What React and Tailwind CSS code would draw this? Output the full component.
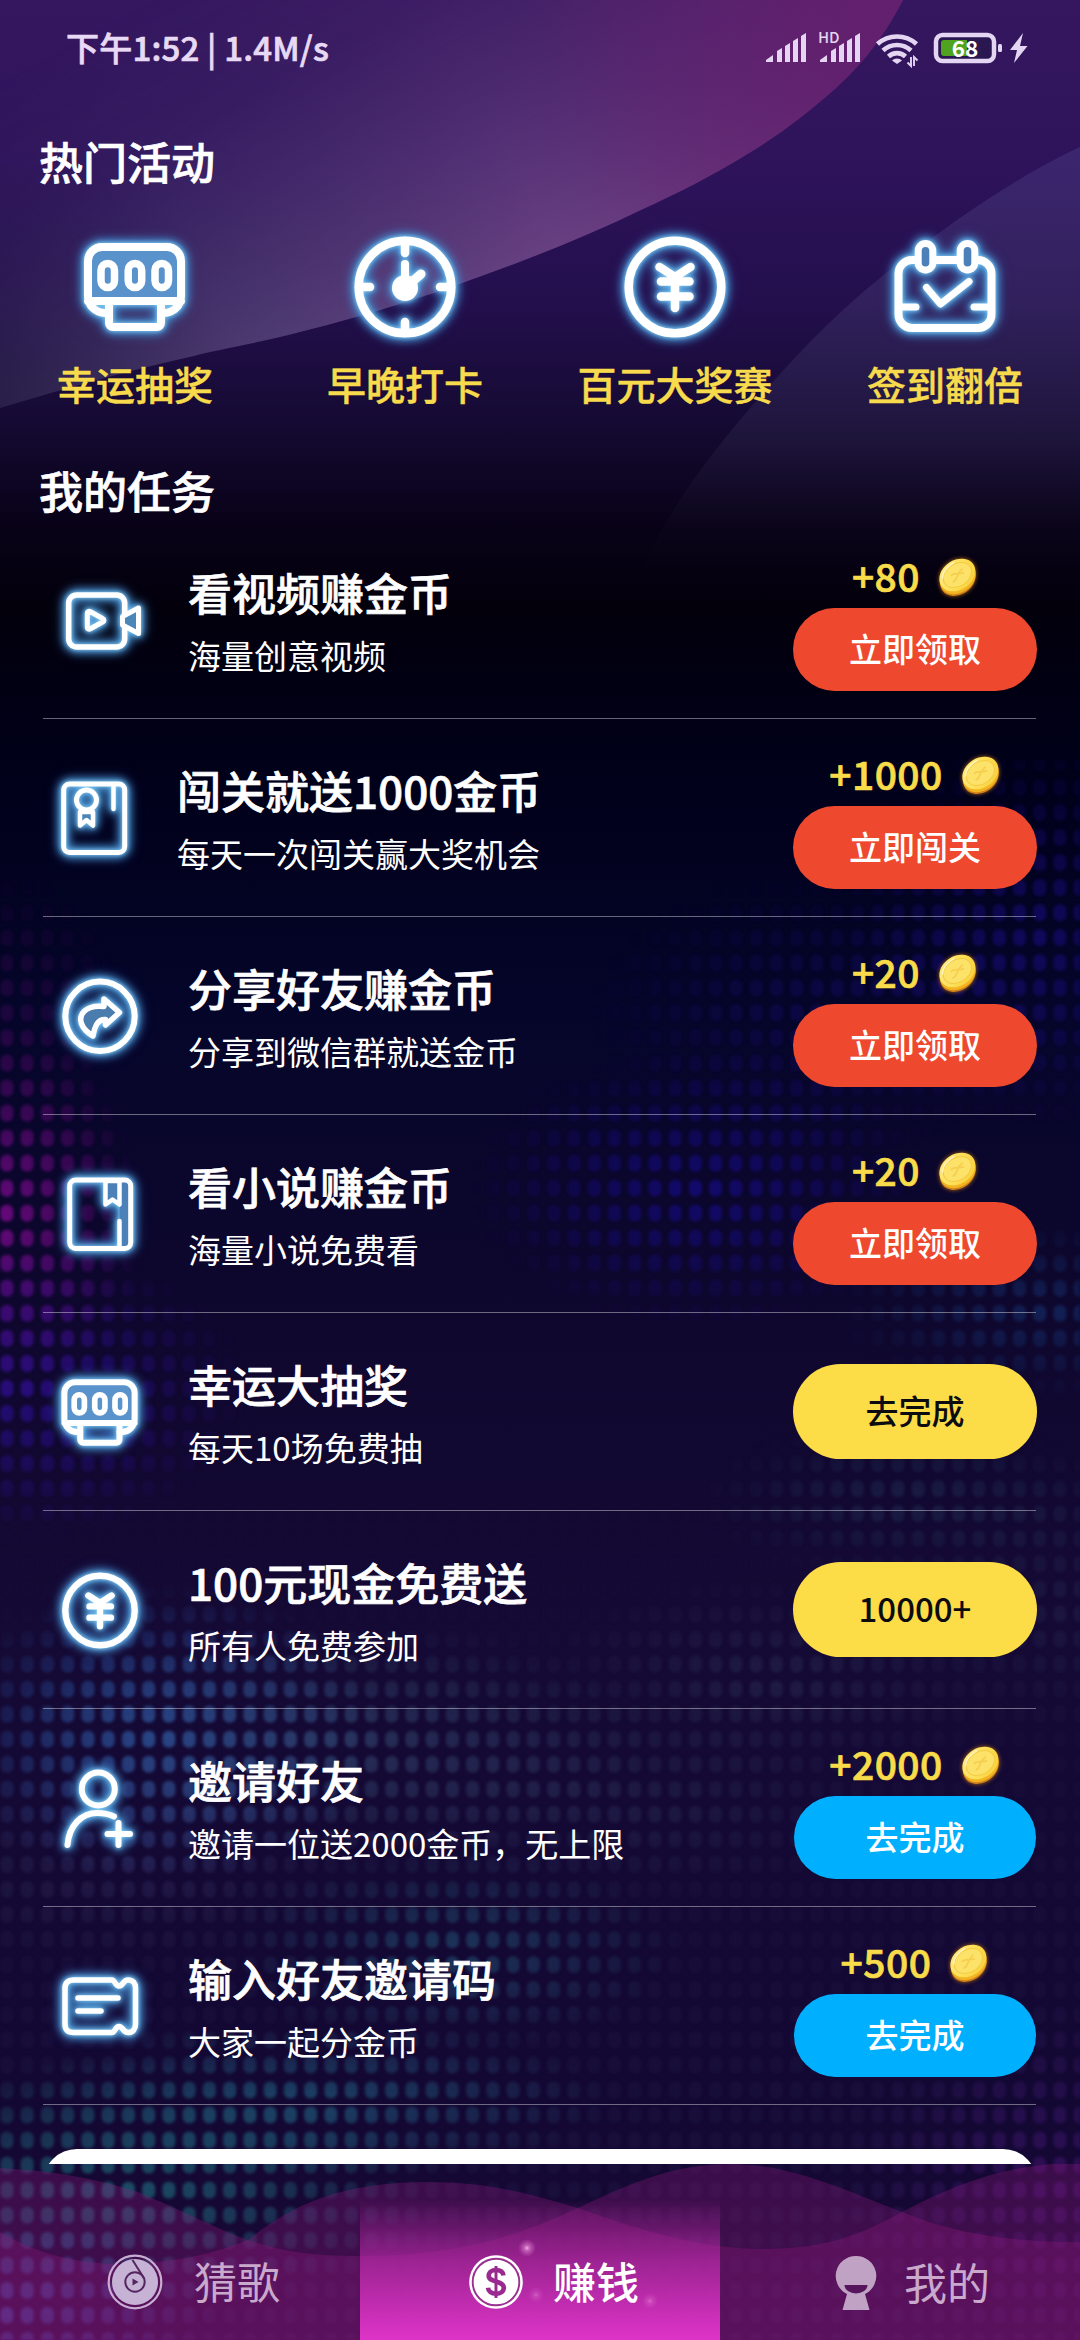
import React from "react";

const FONT = "font-['Noto_Sans_CJK_SC','Noto_Sans',sans-serif]";
const GLOW =
  "[filter:drop-shadow(0_0_2px_#8fd2f8)_drop-shadow(0_0_4px_#4f9bd6)_drop-shadow(0_0_5px_#3b7fc4)]";
const HEAVY = "[-webkit-text-stroke:0.7px_currentColor]";

const RIBBON =
  "M0 0H903C882 40 862 64 836 88C808 113 778 136 746 155C710 177 678 193 641 210C604 228 564 245 522 261C452 288 378 313 300 332C250 345 215 350 194 356C130 370 60 390 0 408Z";

const BLOBS = [
  { x: 0, y: 1215, rx: 140, ry: 200, c: "#8a0a9a", o: 0.85 },
  { x: 20, y: 1390, rx: 230, ry: 150, c: "#3010a8", o: 0.7 },
  { x: 0, y: 1010, rx: 120, ry: 140, c: "#5a0a70", o: 0.35 },
  { x: 160, y: 1735, rx: 220, ry: 150, c: "#2c60bc", o: 0.75 },
  { x: 330, y: 1740, rx: 330, ry: 120, c: "#354f76", o: 0.65 },
  { x: 130, y: 1860, rx: 260, ry: 110, c: "#4a4a80", o: 0.25 },
  { x: 450, y: 1950, rx: 230, ry: 100, c: "#205575", o: 0.65 },
  { x: 310, y: 2100, rx: 300, ry: 80, c: "#1f6080", o: 0.7 },
  { x: 120, y: 2190, rx: 320, ry: 130, c: "#1c7884", o: 0.7 },
  { x: 0, y: 2310, rx: 220, ry: 100, c: "#3060c0", o: 0.7 },
  { x: 700, y: 1190, rx: 230, ry: 140, c: "#1a0da8", o: 0.62 },
  { x: 1040, y: 930, rx: 200, ry: 200, c: "#200f9c", o: 0.55 },
  { x: 830, y: 1010, rx: 240, ry: 140, c: "#200f90", o: 0.35 },
  { x: 1050, y: 1310, rx: 220, ry: 90, c: "#17428a", o: 0.5 },
  { x: 910, y: 1500, rx: 220, ry: 80, c: "#24385f", o: 0.5 },
  { x: 1080, y: 1600, rx: 170, ry: 140, c: "#2c3460", o: 0.35 },
  { x: 770, y: 1680, rx: 230, ry: 100, c: "#323a60", o: 0.4 },
  { x: 600, y: 1800, rx: 280, ry: 100, c: "#2f3862", o: 0.4 },
  { x: 1080, y: 2180, rx: 240, ry: 180, c: "#5a1090", o: 0.4 },
];

function Backdrop() {
  return (
    <svg className="absolute inset-0 h-[2340px] w-[1080px]" viewBox="0 0 1080 2340">
      <defs>
        <linearGradient id="night" x1="0" y1="0" x2="0" y2="1">
          <stop offset="0" stopColor="#35175f" />
          <stop offset="0.07" stopColor="#2e135b" />
          <stop offset="0.13" stopColor="#230f4c" />
          <stop offset="0.18" stopColor="#150a33" />
          <stop offset="0.225" stopColor="#080217" />
          <stop offset="0.26" stopColor="#03000c" />
          <stop offset="0.32" stopColor="#000018" />
          <stop offset="0.43" stopColor="#05052a" />
          <stop offset="0.55" stopColor="#0e072d" />
          <stop offset="0.7" stopColor="#150a35" />
          <stop offset="0.9" stopColor="#130833" />
          <stop offset="1" stopColor="#1a0836" />
        </linearGradient>
        <linearGradient id="ribbonTone" gradientUnits="userSpaceOnUse" x1="860" y1="0" x2="0" y2="400">
          <stop offset="0" stopColor="#64226f" />
          <stop offset="0.4" stopColor="#704688" />
          <stop offset="0.75" stopColor="#5c4a80" />
          <stop offset="1" stopColor="#383058" />
        </linearGradient>
        <linearGradient id="ribbonFade" gradientUnits="userSpaceOnUse" x1="600" y1="250" x2="400" y2="-130">
          <stop offset="0" stopColor="#fff" stopOpacity="0.95" />
          <stop offset="0.35" stopColor="#fff" stopOpacity="0.55" />
          <stop offset="0.7" stopColor="#fff" stopOpacity="0.15" />
          <stop offset="1" stopColor="#fff" stopOpacity="0" />
        </linearGradient>
        <radialGradient id="ribbonTop" gradientUnits="userSpaceOnUse" cx="880" cy="10" r="340">
          <stop offset="0" stopColor="#64206e" stopOpacity="0.9" />
          <stop offset="1" stopColor="#64206e" stopOpacity="0" />
        </radialGradient>
        <mask id="ribbonMask">
          <rect width="1080" height="500" fill="url(#ribbonFade)" />
        </mask>
        <linearGradient id="hill" x1="0" y1="0" x2="0" y2="1">
          <stop offset="0" stopColor="#3c266f" />
          <stop offset="0.35" stopColor="#33235e" stopOpacity="0.85" />
          <stop offset="0.65" stopColor="#241c42" stopOpacity="0.6" />
          <stop offset="0.95" stopColor="#0a0614" stopOpacity="0" />
        </linearGradient>
        <pattern id="dot" patternUnits="userSpaceOnUse" x="-3.2" y="1125.5" width="20.25" height="25.05">
          <rect x="3.6" y="4" width="13" height="17" rx="6" fill="#fff" />
        </pattern>
        <filter id="soften">
          <feGaussianBlur stdDeviation="1.6" />
        </filter>
        <mask id="dots">
          <rect y="760" width="1080" height="1580" fill="url(#dot)" filter="url(#soften)" />
        </mask>
        {BLOBS.map((b, i) => (
          <radialGradient id={"blob" + i} key={i}>
            <stop offset="0" stopColor={b.c} stopOpacity={b.o * 0.85} />
            <stop offset="0.5" stopColor={b.c} stopOpacity={b.o * 0.45} />
            <stop offset="1" stopColor={b.c} stopOpacity="0" />
          </radialGradient>
        ))}
        <linearGradient id="haze" x1="0" y1="0" x2="0" y2="1">
          <stop offset="0" stopColor="#2d2a5c" stopOpacity="0" />
          <stop offset="1" stopColor="#2d2a5c" stopOpacity="0.25" />
        </linearGradient>
      </defs>
      <rect width="1080" height="2340" fill="url(#night)" />
      <g mask="url(#ribbonMask)">
        <path d={RIBBON} fill="url(#ribbonTone)" />
      </g>
      <path d={RIBBON} fill="url(#ribbonTop)" />
      <path d="M1080 147C1010 180 950 224 900 262C840 308 790 360 740 420C690 480 655 530 630 600H1080Z" fill="url(#hill)" />
      <g mask="url(#dots)">
        <rect y="1500" width="1080" height="840" fill="url(#haze)" />
        {BLOBS.map((b, i) => (
          <ellipse key={i} cx={b.x} cy={b.y} rx={b.rx} ry={b.ry} fill={"url(#blob" + i + ")"} />
        ))}
      </g>
    </svg>
  );
}

function StatusIcons() {
  const bars = [
    [11, 17],
    [19, 12],
    [27, 7],
    [35, 2],
  ];
  const Signal = ({ x }) => (
    <g transform={"translate(" + x + " 30)"}>
      <path d="M0 31V29L7 24V31Z" />
      {bars.map(([bx, by]) => (
        <path key={bx} d={"M" + bx + " 31V" + (by + 3) + "L" + (bx + 5) + " " + by + "V31Z"} />
      ))}
    </g>
  );
  return (
    <svg className="h-[60px] w-[280px]" viewBox="760 16 280 60" fill="#e4d6f2">
      <Signal x={766} />
      <Signal x={820} />
      <text x="818" y="42" fontSize="15" fontWeight="500" fontFamily="Noto Sans CJK SC, sans-serif">HD</text>
      <g fill="none" stroke="#e4d6f2" strokeWidth="4.6">
        <path d="M877.5 43a29 29 0 0 1 39 0" />
        <path d="M883 49.5a20.5 20.5 0 0 1 28 0" />
        <path d="M888.500 55.500a12.500 12.500 0 0 1 17 0" />
      </g>
      <path d="M892 59.500a7 7 0 0 1 10 0L897 63Z" />
      <path d="M911 56V65L907.500 61.500M914 65V56L917.500 59.500" fill="none" stroke="#e4d6f2" strokeWidth="1.9" />
      <rect x="936" y="34" width="58" height="26" rx="6.500" fill="#2a1650" stroke="#e4d6f2" strokeWidth="4.500" />
      <path d="M944 39H967V55H944a3 3 0 0 1-3-3V42a3 3 0 0 1 3-3Z" fill="#4fa31e" />
      <text x="965" y="55.500" fill="#fff" fontSize="22.500" fontWeight="600" textAnchor="middle" fontFamily="Noto Sans CJK SC, sans-serif">68</text>
      <rect x="998" y="43" width="4" height="8" rx="1.500" />
      <path d="M1023 32L1010 49H1017L1014 62L1027.500 45H1020Z" />
    </svg>
  );
}

function SlotShapes() {
  return (
    <>
      <path d="M14 74V34a14 14 0 0 1 14-14H92a14 14 0 0 1 14 14V74Z" fill="#5a92cc" stroke="none" />
      <path
        d="M34 86H30a17 17 0 0 1-17-17V34a14 14 0 0 1 14-14H92a14 14 0 0 1 14 14V69a17 17 0 0 1-17 17h-3M13 74H106"
        strokeWidth="8"
      />
      <path d="M34 76V96a4 4 0 0 0 4 4H82a4 4 0 0 0 4-4V76" strokeWidth="8" />
      <g strokeWidth="7.5">
        <rect x="26" y="36.500" width="13.500" height="24" rx="6.700" />
        <rect x="53.200" y="36.500" width="13.500" height="24" rx="6.700" />
        <rect x="80" y="36.500" width="13.500" height="24" rx="6.700" />
      </g>
    </>
  );
}

function YenShapes() {
  return (
    <>
      <circle cx="60" cy="60" r="46.300" strokeWidth="8.500" />
      <path d="M44.500 40L60 50L75.500 40M60 50V81M46 54.500H74.500M46 69.500H74.500" strokeWidth="8.500" />
    </>
  );
}

const SHAPES = {
  slot: <SlotShapes />,
  yen: <YenShapes />,
  clock: (
    <>
      <circle cx="60" cy="60" r="46.300" strokeWidth="8.500" />
      <path d="M60 14V26M60 106V95M14 60H25M106 60H95" strokeWidth="8.500" />
      <path d="M60 37V60" strokeWidth="8" />
      <path d="M60 61L76 47" strokeWidth="9" />
      <circle cx="60" cy="61" r="13" fill="#fff" stroke="none" />
    </>
  ),
  calendar: (
    <>
      <path d="M31 33H27a13.500 13.500 0 0 0-13.500 13.500V87A13.500 13.500 0 0 0 27 101H93a13.500 13.500 0 0 0 13.500-14V46.500A13.500 13.500 0 0 0 93 33H91M50 33H73" strokeWidth="8" />
      <rect x="33.200" y="16.500" width="14.600" height="26.500" rx="7.300" strokeWidth="7" fill="#4b80b8" />
      <rect x="75.200" y="16.500" width="14.600" height="26.500" rx="7.300" strokeWidth="7" fill="#4b80b8" />
      <path d="M41.500 60.500L55.500 77L84 54.500" strokeWidth="7" />
      <path d="M14 80H31M106 80H89" strokeWidth="7" />
    </>
  ),
  smallSlot: (
    <g transform="translate(59.500 60.500) scale(.755) translate(-59.500 -60)">
      <SlotShapes />
    </g>
  ),
  smallYen: (
    <g transform="translate(60 60.500) scale(.75) translate(-60 -60)">
      <YenShapes />
    </g>
  ),
  video: (
    <g strokeWidth="5.500">
      <rect x="28.700" y="35" width="56" height="52" rx="8" />
      <path d="M47.300 53V67.500C47.300 69 49 69.500 50 69L62.500 62C64.500 61 64.500 59.500 62.500 58.500L50 51.500C49 51 47.300 51.500 47.300 53Z" strokeWidth="5" />
      <path d="M82.500 56.500L98.500 48V73.500L82.500 65Z" fill="#4b86b8" strokeWidth="5" />
    </g>
  ),
  medal: (
    <g strokeWidth="5">
      <rect x="23.700" y="26" width="61" height="68.500" rx="6" />
      <circle cx="46.500" cy="42" r="10" />
      <path d="M40 54V67.500L46.500 62L53 67.500V54Z" fill="#4b86b8" strokeWidth="4.500" />
      <path d="M73.500 27V51" strokeWidth="4.500" />
    </g>
  ),
  share: (
    <>
      <circle cx="60" cy="60.300" r="34.700" strokeWidth="6" />
      <path d="M64 43L79.500 56.500L65.500 69V63.500C58 63 55 69 53 80C41 73 37 62 44.500 55C50 50 56 49.500 64 50.500Z" strokeWidth="5.500" fill="#4a7cae" />
    </>
  ),
  book: (
    <g strokeWidth="5">
      <path d="M79.500 26H90V94H79.500Z" fill="#4b80b8" stroke="none" />
      <rect x="29.700" y="26" width="61" height="68.500" rx="6" />
      <path d="M65.500 27V50.500L72.500 45.500L79.500 50.500V27Z" fill="#4b80b8" strokeWidth="4.500" />
      <path d="M79.500 67V94" strokeWidth="4.500" />
    </g>
  ),
  invite: (
    <g strokeWidth="6">
      <circle cx="58.300" cy="41" r="16.500" />
      <path d="M27.500 97C29 78 41 65 57 65C64 65 69 66 74 68.500" />
      <path d="M78.500 75V97M67.500 86H90" />
    </g>
  ),
  ticket: (
    <g strokeWidth="5.500">
      <path d="M34 34H72C75 34 75 40 79 40C83 40 83 34 88 34C93 34 95.500 37 95.500 42V78C95.500 83 93 86.500 88 86.500C83 86.500 83 80.500 79 80.500C75 80.500 75 86.500 72 86.500H34C28 86.500 25 84 25 78V42C25 37 28 34 34 34Z" />
      <path d="M38 52H78M38 65H61" />
    </g>
  ),
};

function NeonIcon({ name }) {
  return (
    <svg
      className={"h-[120px] w-[120px] shrink-0 overflow-visible " + GLOW}
      viewBox="0 0 120 120"
      fill="none"
      stroke="#fff"
      strokeLinecap="round"
      strokeLinejoin="round"
    >
      {SHAPES[name]}
    </svg>
  );
}

function Coin() {
  return (
    <svg className="-mt-[2px] h-[40px] w-[40px] overflow-visible [filter:drop-shadow(0_0_2px_#b06a10)]" viewBox="0 0 40 40">
      <defs>
        <linearGradient id="coinFace" x1="0" y1="0" x2="1" y2="1">
          <stop offset="0" stopColor="#ffeb8a" />
          <stop offset="0.5" stopColor="#fddf57" />
          <stop offset="1" stopColor="#f7cd34" />
        </linearGradient>
      </defs>
      <g transform="rotate(-34 20 20)">
        <ellipse cx="17.800" cy="23.200" rx="18.800" ry="14.600" fill="#cf7f1c" />
        <ellipse cx="18.800" cy="21.400" rx="19.200" ry="14.900" fill="#f3b422" />
        <ellipse cx="20" cy="18.800" rx="19.300" ry="14.800" fill="url(#coinFace)" />
        <ellipse cx="20" cy="18.800" rx="15.200" ry="11.200" fill="#fde26a" stroke="#f4cb45" strokeWidth="1" />
        <path d="M12 22C17 24 19 17 28 16.500M14 16C18 14 22 20 27 20.500" stroke="#f6cf50" strokeWidth="1.800" fill="none" />
        <path d="M6 13C10 7.500 17 6 24 6.500" stroke="#fff6c4" strokeWidth="1.500" fill="none" strokeLinecap="round" />
      </g>
    </svg>
  );
}

const ACTIVITIES = [
  { icon: "slot", label: "幸运抽奖" },
  { icon: "clock", label: "早晚打卡" },
  { icon: "yen", label: "百元大奖赛" },
  { icon: "calendar", label: "签到翻倍" },
];

const TASKS = [
  { icon: "video", title: "看视频赚金币", sub: "海量创意视频", reward: "+80", action: "立即领取", tone: "red" },
  { icon: "medal", title: "闯关就送1000金币", sub: "每天一次闯关赢大奖机会", reward: "+1000", action: "立即闯关", tone: "red", tight: true },
  { icon: "share", title: "分享好友赚金币", sub: "分享到微信群就送金币", reward: "+20", action: "立即领取", tone: "red" },
  { icon: "book", title: "看小说赚金币", sub: "海量小说免费看", reward: "+20", action: "立即领取", tone: "red" },
  { icon: "smallSlot", title: "幸运大抽奖", sub: "每天10场免费抽", action: "去完成", tone: "yellow" },
  { icon: "smallYen", title: "100元现金免费送", sub: "所有人免费参加", action: "10000+", tone: "yellow" },
  { icon: "invite", title: "邀请好友", sub: "邀请一位送2000金币，无上限", reward: "+2000", action: "去完成", tone: "blue" },
  { icon: "ticket", title: "输入好友邀请码", sub: "大家一起分金币", reward: "+500", action: "去完成", tone: "blue" },
];

const TONES = {
  red: "h-[83px] w-[244px] bg-[#ee482f] text-white",
  yellow: "h-[95px] w-[244px] bg-[#fcdc47] text-[#0c0c10]",
  blue: "h-[83px] w-[242px] bg-[#00b0ff] text-white",
};

function TaskRow({ task }) {
  return (
    <li className="flex h-[198px] flex-col">
      <div className="flex flex-1 items-center pr-[43px] pl-10">
        <NeonIcon name={task.icon} />
        <div className={"mt-[3px] flex-1 whitespace-nowrap text-white " + (task.tight ? "ml-[17px]" : "ml-[28px]")}>
          <h3 className={"text-[44px] leading-[60px] font-medium " + HEAVY}>{task.title}</h3>
          <p className="mt-2 text-[33px] leading-[50px] font-normal">{task.sub}</p>
        </div>
        <div className="flex w-[244px] flex-col items-center">
          {task.reward && (
            <div className="mt-1 mb-1.5 flex h-[50px] items-center gap-[18px] text-[39px] font-medium text-[#f9dc4a]">
              <span className={"-mt-[5px] leading-[50px] tracking-[0.5px] " + HEAVY}>{task.reward}</span>
              <Coin />
            </div>
          )}
          <button className={"flex items-center justify-center rounded-full pb-[2px] text-[33px] leading-none font-medium " + TONES[task.tone]}>
            {task.action}
          </button>
        </div>
      </div>
      <div className="mr-[44px] ml-[43px] h-px bg-white/40" />
    </li>
  );
}

function RecordIcon() {
  return (
    <svg className="h-[56px] w-[56px]" viewBox="0 0 56 56">
      <circle cx="28" cy="28" r="26.300" fill="none" stroke="#c9aed2" strokeWidth="2.200" />
      <circle cx="28" cy="28" r="23" fill="#c5b2d4" />
      <g fill="none" stroke="#54265f" strokeWidth="2">
        <circle cx="28" cy="28" r="9.700" />
        <path d="M25.500 6L37.500 25" />
      </g>
      <path d="M25.500 24.500V31.500L31.500 28Z" fill="#54265f" />
    </svg>
  );
}

function DollarIcon() {
  return (
    <svg className="h-[56px] w-[56px]" viewBox="0 0 56 56">
      <circle cx="28" cy="28" r="26.800" fill="#fff" />
      <circle cx="28" cy="28" r="23.300" fill="none" stroke="#9a3091" strokeWidth="1.900" />
      <path
        d="M35.500 21.500C35 17.800 32 16 28 16C24 16 20.700 18.200 20.700 21.700C20.700 29 35.800 26 35.800 33.800C35.800 37.500 32.500 39.700 28 39.700C23.500 39.700 20.300 37.500 20 33.800"
        fill="none"
        stroke="#9a2a90"
        strokeWidth="4.600"
      />
      <path d="M28 12V44" stroke="#9a2a90" strokeWidth="3" />
    </svg>
  );
}

function ProfileIcon() {
  return (
    <svg className="h-[56px] w-[42px]" viewBox="0 0 42 56">
      <path d="M21 1A20 20 0 0 1 30 39L34.500 55H7.500L12 39A20 20 0 0 1 21 1Z" fill="#c0a2c4" />
      <path d="M9.500 30H32.500A11.500 8.500 0 0 1 9.500 30Z" fill="#56145c" />
    </svg>
  );
}

function Waves() {
  return (
    <svg className="absolute inset-0 h-[176px] w-[1080px]" viewBox="0 2164 1080 176">
      <g fill="#981a80" fillOpacity="0.3">
        <path d="M0 2168C60 2171 100 2180 138 2192C190 2214 215 2228 248 2240C285 2253 320 2256 358 2256C450 2256 510 2240 578 2208C640 2178 680 2164 730 2164C790 2164 840 2188 902 2212C960 2236 1020 2242 1080 2242V2340H0Z" />
        <path d="M0 2232C30 2250 70 2263 115 2264C170 2264 210 2255 248 2240C290 2206 340 2182 427 2182C490 2182 530 2194 578 2208C640 2230 700 2249 764 2249C830 2249 865 2232 902 2212C960 2182 1010 2163 1080 2163V2340H0Z" />
      </g>
    </svg>
  );
}

function Sparks() {
  return (
    <svg className="absolute inset-0 h-[176px] w-[360px]" viewBox="360 2164 360 176">
      <defs>
        <radialGradient id="spark">
          <stop offset="0" stopColor="#ffd0f4" stopOpacity="0.85" />
          <stop offset="0.3" stopColor="#f7a0e6" stopOpacity="0.5" />
          <stop offset="1" stopColor="#f080e0" stopOpacity="0" />
        </radialGradient>
      </defs>
      <circle cx="527" cy="2248" r="9" fill="url(#spark)" />
      <circle cx="536" cy="2295" r="8" fill="url(#spark)" opacity="0.4" />
      <circle cx="650" cy="2301" r="8" fill="url(#spark)" opacity="0.45" />
    </svg>
  );
}

function BottomNav() {
  return (
    <nav className="relative h-[176px] text-[43px] leading-[60px]">
      <Waves />
      <div className="relative grid h-full grid-cols-3 text-[#c9a9cc]">
        <a className="flex items-center pt-[60px] pl-[107px]">
          <span className="flex items-center gap-[31px]">
            <RecordIcon />
            <span className="-mt-1">猜歌</span>
          </span>
        </a>
        <a className="relative flex items-center bg-linear-to-b from-[#d932c4]/0 from-20% via-[#b82aa8]/70 via-55% to-[#de34c8] pt-[60px] pl-[108px] font-medium text-white">
          <Sparks />
          <span className="relative flex items-center gap-[29px]">
            <DollarIcon />
            <span className="-mt-1">赚钱</span>
          </span>
        </a>
        <a className="flex items-center pt-[62px] pl-[115px]">
          <span className="flex items-center gap-[27px]">
            <ProfileIcon />
            <span className="-mt-1">我的</span>
          </span>
        </a>
      </div>
    </nav>
  );
}

export default function App() {
  return (
    <div className={"relative h-[2340px] w-[1080px] overflow-hidden bg-[#0e072d] " + FONT}>
      <Backdrop />
      <div className="relative">
        <main className="h-[2164px] overflow-hidden">
          <header className="flex h-[94px] items-center justify-between pr-10 pl-[66px]">
            <span className={"text-[33px] leading-[50px] font-medium tracking-[0.2px] text-[#e8daf4] " + HEAVY}>
              下午1:52 | 1.4M/s
            </span>
            <StatusIcons />
          </header>
          <h2 className={"flex h-[133px] items-center pl-[39px] text-[44px] font-medium text-white " + HEAVY}>热门活动</h2>
          <section className="grid grid-cols-4">
            {ACTIVITIES.map((a) => (
              <div key={a.label} className="flex flex-col items-center">
                <NeonIcon name={a.icon} />
                <span className="mt-[6px] mb-[2px] text-[39px] leading-[60px] font-medium text-[#f8db4c] [-webkit-text-stroke:0.4px_currentColor]">
                  {a.label}
                </span>
              </div>
            ))}
          </section>
          <h2 className={"flex h-[106px] items-center pt-[44px] pl-[39px] text-[44px] font-medium text-white " + HEAVY}>我的任务</h2>
          <ul>
            {TASKS.map((t) => (
              <TaskRow key={t.title} task={t} />
            ))}
          </ul>
          <div className="mx-[43px] mt-[44px] h-[100px] rounded-[34px] bg-white" />
        </main>
        <BottomNav />
      </div>
    </div>
  );
}
